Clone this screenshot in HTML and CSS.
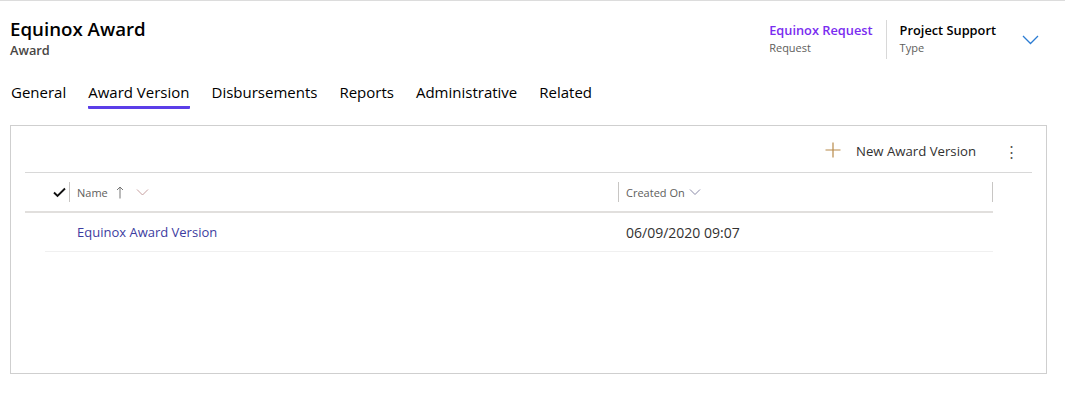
FILE: index.html
```html
<!DOCTYPE html>
<html>
<head>
<meta charset="utf-8">
<link rel="stylesheet" href="styles.css">
</head>
<body>
<div class="page">
  <header class="header">
    <div class="title-block">
      <div class="title">Equinox Award</div>
      <div class="subtitle">Award</div>
    </div>
    <div class="header-fields">
      <div class="hfield">
        <div class="hval link">Equinox Request</div>
        <div class="hlabel">Request</div>
      </div>
      <div class="hsep"></div>
      <div class="hfield">
        <div class="hval">Project Support</div>
        <div class="hlabel">Type</div>
      </div>
      <svg class="hchev" width="17" height="10" viewBox="0 0 17 10"><path d="M1 1 L8.5 8.5 L16 1" fill="none" stroke="#2b7cd3" stroke-width="1.3"/></svg>
    </div>
  </header>
  <nav class="tabs">
    <span class="tab">General</span>
    <span class="tab active">Award Version</span>
    <span class="tab">Disbursements</span>
    <span class="tab">Reports</span>
    <span class="tab">Administrative</span>
    <span class="tab">Related</span>
  </nav>
  <section class="panel">
    <div class="cmdbar">
      <div class="cmd">
        <svg width="16" height="16" viewBox="0 0 16 16"><path d="M8 0.5 V15.5 M0.5 8 H15.5" stroke="#b88a4a" stroke-width="1.2" fill="none"/></svg>
        <span>New Award Version</span>
      </div>
      <div class="more">⋮</div>
    </div>
    <div class="grid">
      <div class="ghead">
        <div class="gcheck">
          <svg width="13" height="11" viewBox="0 0 13 11"><path d="M1 5.5 L4.5 9 L12 1.5" fill="none" stroke="#111" stroke-width="1.9"/></svg>
        </div>
        <div class="gcol name">
          <span>Name</span>
          <svg class="arrow" width="8" height="13" viewBox="0 0 8 13"><path d="M4 12.5 V1 M1 4 L4 1 L7 4" fill="none" stroke="#777" stroke-width="1"/></svg>
          <svg class="chev" width="13" height="8" viewBox="0 0 13 8"><path d="M1 1.5 L6.5 7 L12 1.5" fill="none" stroke="#c7a0a0" stroke-width="1"/></svg>
        </div>
        <div class="gcol created">
          <span>Created On</span>
          <svg class="chev" width="12" height="8" viewBox="0 0 12 8"><path d="M1 1.5 L6 6.5 L11 1.5" fill="none" stroke="#8a8aa8" stroke-width="1"/></svg>
        </div>
      </div>
      <div class="grow">
        <div class="gspacer"></div>
        <div class="gcell name"><span class="rlink">Equinox Award Version</span></div>
        <div class="gcell created">06/09/2020 09:07</div>
      </div>
    </div>
  </section>
</div>
</body>
</html>
```

FILE: styles.css
```css
* { box-sizing: border-box; }
html, body { margin: 0; padding: 0; background: #fff; }
body {
  font-family: "Open Sans", "Noto Sans", sans-serif;
  color: #323130;
}
.page {
  border-top: 1px solid #dcdcdc;
  width: 1065px;
}
.header {
  display: flex;
  justify-content: space-between;
  align-items: flex-start;
  padding: 14px 26px 0 10px;
  height: 80px;
}
.title {
  font-size: 18.7px;
  font-weight: 600;
  color: #000;
  line-height: 27px;
}
.subtitle {
  font-size: 12.8px;
  font-weight: 600;
  color: #484644;
  line-height: 16px;
}
.header-fields {
  display: flex;
  align-items: flex-start;
  padding-top: 5px;
}
.hfield { padding: 0 13px; }
.hval {
  font-size: 12.8px;
  font-weight: 600;
  color: #000;
  line-height: 20px;
}
.hval.link { color: #7a2cf0; }
.hlabel {
  font-size: 11px;
  color: #605e5c;
  line-height: 16px;
}
.hsep {
  width: 1px;
  height: 39px;
  background: #d8d8d8;
}
.hchev { margin: 15px 0 0 13px; }
.tabs {
  display: flex;
  padding-left: 11px;
  height: 44px;
}
.tab {
  font-size: 15px;
  color: #000;
  line-height: 22px;
  margin-right: 22px;
  height: 25px;
}
.tab.active {
  border-bottom: 3px solid #5b3ee8;
  border-radius: 1px;
  height: 28px;
}
.panel {
  margin: 0 18px 0 10px;
  border: 1px solid #cfcfcf;
  height: 249px;
  padding: 0 14px;
}
.cmdbar {
  display: flex;
  justify-content: flex-end;
  align-items: center;
  height: 47px;
  border-bottom: 1px solid #d8d8d8;
}
.cmd {
  display: flex;
  align-items: center;
  gap: 15px;
  font-size: 13.2px;
  color: #323130;
  padding-top: 4px;
}
.cmd svg { margin-bottom: 2px; }
.more {
  font-size: 15px;
  color: #555;
  margin-left: 28px;
  margin-right: 18px;
  width: 10px;
  text-align: center;
  padding-top: 3px;
}
.grid { width: 968px; }
.ghead {
  display: flex;
  height: 40px;
  border-bottom: 2px solid #e1dfdd;
  align-items: center;
}
.gcheck {
  width: 45px;
  padding-left: 28px;
  display: flex;
  align-items: center;
  height: 20px;
  border-right: 1px solid #c8c6c4;
}
.gcol {
  display: flex;
  align-items: center;
  font-size: 11px;
  color: #605e5c;
  height: 20px;
  padding-left: 7px;
}
.gcol.name { width: 549px; border-right: 1px solid #c8c6c4; }
.gcol.created { width: 374px; border-right: 1px solid #c8c6c4; }
.gcol .arrow { margin-left: 8px; }
.gcol.name .chev { margin-left: 12px; }
.gcol.created .chev { margin-left: 4px; }
.grow {
  display: flex;
  height: 39px;
  align-items: center;
}
.gspacer { width: 20px; height: 39px; }
.grow .gcell {
  height: 39px;
  display: flex;
  align-items: center;
  border-bottom: 1px solid #f0f0f0;
  font-size: 13px;
}
.grow .gcell.name { width: 574px; padding-left: 32px; }
.grow .gcell.created { width: 374px; padding-left: 7px; color: #323130; font-size: 14px; }
.rlink { color: #3c3ca0; }
```
